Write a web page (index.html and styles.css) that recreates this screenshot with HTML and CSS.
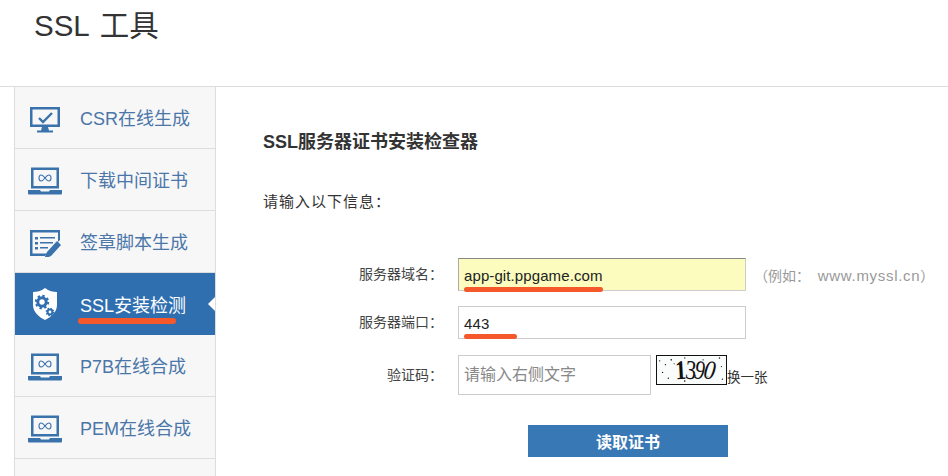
FILE: index.html
```html
<!DOCTYPE html>
<html lang="zh">
<head>
    <meta charset="UTF-8">
    <meta name="viewport" content="width=device-width, initial-scale=1.0">
    <title>SSL 工具</title>
    <link rel="stylesheet" href="styles.css">
</head>
<body>
    <h1 class="page-title">SSL 工具</h1>
    <div class="layout">
        <ul class="side-nav">
            <li class="nav-item">
                <svg class="nav-icon" viewBox="0 0 36 30"><path fill="#3a72ac" fill-rule="evenodd" d="M3 4h30v20H3zM5.500 6.500v15h25v-15zM15 24h6l1 3.500h4v2H10v-2h4z"/><path fill="none" stroke="#3a72ac" stroke-width="2.400" d="M12 15l4 4 9-9"/></svg>
                <span>CSR在线生成</span>
            </li>
            <li class="nav-item">
                <svg class="nav-icon" viewBox="0 0 36 30"><use href="#laptop"/></svg>
                <span>下载中间证书</span>
            </li>
            <li class="nav-item">
                <svg class="nav-icon" viewBox="0 -2 36 30"><path fill="#3a72ac" fill-rule="evenodd" d="M3 1h30v10l-2 2V3.500H5.500v21H20l-2 2.500H3z"/><path fill="#3a72ac" d="M8 8h3v2.500H8zM8 13h3v2.500H8zM8 18h3v2.500H8zM13 8h15v1.500H13zM13 13h13v1.500H13zM13 18h8v1.500H13zM30 12l4 4-10 11-7 3 3-7z"/></svg>
                <span>签章脚本生成</span>
            </li>
            <li class="nav-item active">
                <svg class="nav-icon" viewBox="0 0 36 34"><path fill="#fff" d="M18 1c4 3 8 4 12 4v13c0 7-6 12-12 15C12 30 6 25 6 18V5c4 0 8-1 12-4z"/><circle cx="15" cy="15" r="4.200" fill="none" stroke="#2f6fb0" stroke-width="3"/><circle cx="15" cy="15" r="6.200" fill="none" stroke="#2f6fb0" stroke-width="2" stroke-dasharray="2.400 2.400"/><circle cx="23" cy="25" r="2.400" fill="none" stroke="#2f6fb0" stroke-width="2"/><circle cx="23" cy="25" r="3.700" fill="none" stroke="#2f6fb0" stroke-width="1.300" stroke-dasharray="1.500 1.400"/></svg>
                <span class="nav-mark">SSL安装检测</span>
            </li>
            <li class="nav-item">
                <svg class="nav-icon" viewBox="0 0 36 30"><use href="#laptop"/></svg>
                <span>P7B在线合成</span>
            </li>
            <li class="nav-item">
                <svg class="nav-icon" viewBox="0 0 36 30"><use href="#laptop"/></svg>
                <span>PEM在线合成</span>
            </li>
            <li class="nav-item nav-rest"></li>
        </ul>
        <div class="content">
            <h2 class="content-title">SSL服务器证书安装检查器</h2>
            <p class="intro">请输入以下信息：</p>
            <form class="check-form">
                <label class="field-label">服务器域名：</label>
                <div class="field">
                    <div class="text-box filled">app-git.ppgame.com<i class="underline domain-line"></i></div>
                    <span class="hint">（例如：  <span class="hint-url">www.myssl.cn</span>）</span>
                </div>
                <label class="field-label">服务器端口：</label>
                <div class="field">
                    <div class="text-box">443<i class="underline port-line"></i></div>
                </div>
                <label class="field-label code-label">验证码：</label>
                <div class="field captcha-field">
                    <div class="text-box code-box">请输入右侧文字</div>
                    <div class="captcha">
                        <svg class="captcha-noise" viewBox="0 0 70 29"><g fill="#111"><circle cx="2" cy="5" r=".7"/><circle cx="8" cy="9" r=".7"/><circle cx="14" cy="4" r=".8"/><circle cx="17" cy="8" r=".6"/><circle cx="5" cy="17" r=".7"/><circle cx="11" cy="23" r=".7"/><circle cx="28" cy="2" r=".7"/><circle cx="28" cy="26" r=".8"/><circle cx="47" cy="4" r=".7"/><circle cx="64" cy="2" r=".8"/><circle cx="66" cy="11" r=".6"/><circle cx="67" cy="24" r=".7"/><circle cx="52" cy="21" r=".5"/></g></svg>
                        <span class="digit d1">1</span><span class="digit d2">3</span><span class="digit d3">9</span><span class="digit d4">0</span>
                    </div>
                    <a class="swap">换一张</a>
                </div>
                <div></div>
                <button type="button" class="read-btn">读取证书</button>
            </form>
        </div>
    </div>
    <svg width="0" height="0" class="defs">
        <symbol id="laptop" viewBox="0 0 36 30">
            <path fill="#3a72ac" fill-rule="evenodd" d="M4 2.500h28v21H4zM6.500 5v16h23V5z"/>
            <path fill="#3a72ac" d="M1 25h12l1 1.500h8l1-1.500h12v3.500q0 1-1 1H2q-1 0-1-1z"/>
            <path fill="none" stroke="#3a72ac" stroke-width="1.100" d="M18 13c-1.500-2-2.500-3-3.800-3s-2.200 1.200-2.200 3 1 3 2.200 3 2.300-1 3.800-3 2.500-3 3.800-3 2.200 1.200 2.200 3-1 3-2.200 3-2.300-1-3.800-3z"/>
        </symbol>
    </svg>
</body>
</html>
```
FILE: styles.css
```css
* {
    box-sizing: border-box;
}

body {
    margin: 0;
    padding: 0;
    font-family: "Liberation Sans", "Noto Sans CJK SC", sans-serif;
    background-color: white;
    color: #333;
    height: 476px;
    overflow: hidden;
}

.defs {
    position: absolute;
}

.page-title {
    margin: 0;
    padding: 8px 0 0 34px;
    height: 86px;
    font-size: 29.500px;
    line-height: 36px;
    font-weight: 400;
    color: #333;
    word-spacing: 3px;
}

.layout {
    display: flex;
    height: 390px;
    border-top: 1px solid #ddd;
    padding-left: 14px;
}

.side-nav {
    list-style: none;
    margin: 0;
    padding: 0;
    width: 202px;
    flex-shrink: 0;
    background: #f7f7f8;
    border-left: 1px solid #ddd;
    border-right: 1px solid #ddd;
}

.nav-item {
    position: relative;
    display: flex;
    align-items: center;
    height: 62px;
    padding-left: 12px;
    border-bottom: 1px solid #ddd;
    font-size: 18px;
    line-height: 24px;
    color: #4a76a8;
}

.nav-item span {
    margin-top: 2px;
}

.nav-rest {
    height: 17px;
    border-bottom: 0;
}

.nav-icon {
    width: 36px;
    height: 30px;
    margin-right: 17px;
    flex-shrink: 0;
}

.nav-item.active {
    background: #2f6fb0;
    color: white;
    border-bottom: 0;
}

.nav-item.active .nav-icon {
    height: 34px;
}

.nav-item.active span {
    margin-top: 4px;
}

.nav-item.active::after {
    content: "";
    position: absolute;
    right: 0;
    top: 24px;
    border: 7px solid transparent;
    border-left-width: 0;
    border-right-color: white;
}

.nav-mark {
    position: relative;
}

.nav-mark::after {
    content: "";
    position: absolute;
    left: -2px;
    right: 10px;
    bottom: -6px;
    height: 6px;
    border-radius: 3px;
    background: #f4582b;
}

.content {
    flex: 1;
    padding: 44px 0 0 47px;
}

.content-title {
    margin: 0;
    font-size: 18px;
    line-height: 22px;
    font-weight: 700;
    color: #333;
}

.intro {
    margin: 38px 0 0;
    font-size: 15px;
    line-height: 22px;
    letter-spacing: 1px;
    color: #333;
}

.check-form {
    display: grid;
    grid-template-columns: 180px 1fr;
    column-gap: 15px;
    row-gap: 15px;
    margin-top: 45px;
    font-size: 14px;
}

.field-label {
    text-align: right;
    color: #444;
    line-height: 33px;
    white-space: nowrap;
}

.code-label {
    margin-top: 1px;
    line-height: 40px;
}

.field {
    display: flex;
    align-items: center;
}

.text-box {
    position: relative;
    width: 288px;
    height: 33px;
    padding-left: 5px;
    border: 1px solid #ccc;
    font-size: 15px;
    line-height: 33px;
    letter-spacing: 0.1px;
    color: #222;
}

.text-box.filled {
    background: #fbfcbe;
    border-top-color: #888;
    border-left-color: #aaa;
}

.hint {
    margin-left: 8px;
    font-size: 14px;
    color: #999;
    white-space: pre;
}

.hint-url {
    font-size: 15px;
    letter-spacing: 0.7px;
}

.underline {
    position: absolute;
    left: 5px;
    bottom: -2px;
    height: 5px;
    border-radius: 3px;
    background: #f4582b;
}

.domain-line {
    width: 139px;
}

.port-line {
    width: 53px;
    bottom: -1px;
}

.captcha-field {
    align-items: flex-start;
    margin-top: 1px;
}

.code-box {
    width: 193px;
    height: 40px;
    line-height: 38px;
    font-size: 16px;
    letter-spacing: 0;
    color: #888;
}

.captcha {
    position: relative;
    display: flex;
    justify-content: center;
    align-items: center;
    width: 71px;
    height: 30px;
    margin-left: 5px;
    padding-left: 7px;
    border: 1px solid #111;
    background: #fafbfb;
    font-family: "Liberation Serif", serif;
    font-size: 27px;
    line-height: 28px;
    color: #111;
}

.captcha-noise {
    position: absolute;
    left: 0;
    top: 0;
    width: 69px;
    height: 28px;
}

.digit {
    display: inline-block;
    margin: 0 -2px;
}

.d1 {
    font-weight: 700;
    transform: scaleX(0.8) rotate(-4deg);
}

.d2 {
    transform: scaleX(0.8) rotate(6deg);
}

.d3 {
    font-style: italic;
    font-weight: 400;
    transform: scaleX(0.75) rotate(8deg);
}

.d4 {
    font-style: italic;
    transform: scaleX(0.85) rotate(10deg);
}

.swap {
    margin-top: 13px;
    font-size: 13.500px;
    line-height: 20px;
    color: #333;
}

.read-btn {
    width: 200px;
    height: 32px;
    margin: 15px 0 0 70px;
    padding: 0;
    border: 0;
    background: #3878b4;
    color: white;
    font-family: inherit;
    font-size: 16px;
    font-weight: 700;
}
```
